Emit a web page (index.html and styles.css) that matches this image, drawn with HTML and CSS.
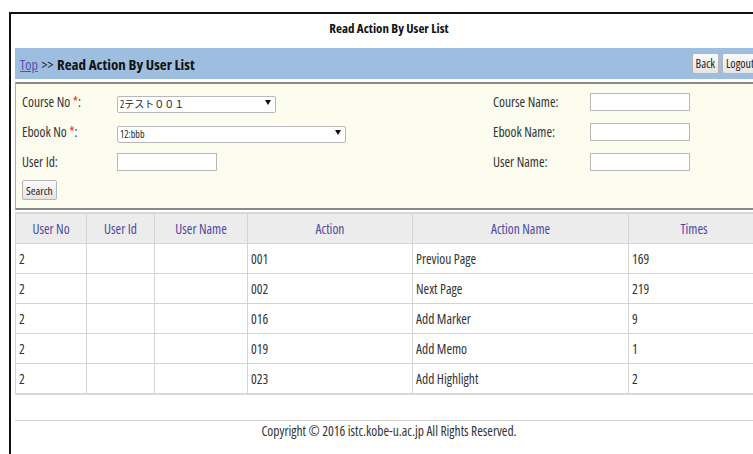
FILE: index.html
```html
<!DOCTYPE html>
<html lang="ja">
<head>
<meta charset="utf-8">
<title>Read Action By User List</title>
<link rel="stylesheet" href="styles.css">
</head>
<body>
<div class="frame">
  <h1 class="page-title">Read Action By User List</h1>

  <div class="nav-bar">
    <div class="crumbs"><a href="#" class="crumb-link">Top</a> &gt;&gt; <b>Read Action By User List</b></div>
    <div class="nav-actions">
      <button class="btn">Back</button>
      <button class="btn">Logout</button>
    </div>
  </div>

  <form class="filter">
    <div class="filter-grid">
      <label class="lbl">Course No <span class="req">*</span>:</label>
      <div class="fld"><span class="sel-wrap sel-course"><select class="sel"><option>2テスト００１</option></select></span></div>
      <label class="lbl">Course Name:</label>
      <div class="fld"><input class="txt" type="text"></div>

      <label class="lbl">Ebook No <span class="req">*</span>:</label>
      <div class="fld"><span class="sel-wrap sel-ebook"><select class="sel"><option>12:bbb</option></select></span></div>
      <label class="lbl">Ebook Name:</label>
      <div class="fld"><input class="txt" type="text"></div>

      <label class="lbl">User Id:</label>
      <div class="fld"><input class="txt" type="text"></div>
      <label class="lbl">User Name:</label>
      <div class="fld"><input class="txt" type="text"></div>
    </div>
    <button type="button" class="btn btn-search">Search</button>
  </form>

  <table class="list">
    <colgroup>
      <col style="width:71px"><col style="width:68px"><col style="width:93px">
      <col style="width:165px"><col style="width:216px"><col>
    </colgroup>
    <thead>
      <tr><th>User No</th><th>User Id</th><th>User Name</th><th>Action</th><th>Action Name</th><th>Times</th></tr>
    </thead>
    <tbody>
      <tr><td>2</td><td></td><td></td><td>001</td><td>Previou Page</td><td>169</td></tr>
      <tr><td>2</td><td></td><td></td><td>002</td><td>Next Page</td><td>219</td></tr>
      <tr><td>2</td><td></td><td></td><td>016</td><td>Add Marker</td><td>9</td></tr>
      <tr><td>2</td><td></td><td></td><td>019</td><td>Add Memo</td><td>1</td></tr>
      <tr><td>2</td><td></td><td></td><td>023</td><td>Add Highlight</td><td>2</td></tr>
    </tbody>
  </table>

  <footer class="foot">Copyright © 2016 istc.kobe-u.ac.jp All Rights Reserved.</footer>
</div>
</body>
</html>
```

FILE: styles.css
```css
html, body {
  margin: 0;
  padding: 0;
  overflow: hidden;
  background: #fff;
}

body {
  padding: 12px 0 0 9px;
  font-family: "Open Sans", "Noto Sans CJK JP", sans-serif;
  font-stretch: 75%;
  font-size: 13px;
  color: #333;
}

.frame {
  width: 748px;
  min-height: 460px;
  border: 2px solid #111;
  border-right: 0;
  padding: 0 0 0 4px;
}

.page-title {
  margin: 0;
  height: 34px;
  line-height: 29px;
  text-align: center;
  font-size: 13px;
  font-weight: bold;
  color: #111;
}

.nav-bar {
  display: flex;
  align-items: center;
  justify-content: space-between;
  height: 31px;
  background: #9dbedf;
  padding: 0 0 0 5px;
}

.crumbs {
  font-size: 14px;
  color: #222;
  word-spacing: 1px;
}

.crumbs b {
  color: #111;
  font-size: 15px;
  word-spacing: 0;
}

.crumb-link {
  color: #5b4db0;
  text-decoration: underline;
}

.nav-actions {
  display: flex;
  gap: 3px;
  margin-right: 5px;
}

.btn {
  font-family: inherit;
  font-stretch: inherit;
  font-size: 12px;
  color: #222;
  background: linear-gradient(#fbfbfb, #e4e4e4);
  border: 1px solid #b5b5b5;
  border-radius: 2px;
  height: 21px;
  padding: 0 3px;
  line-height: 19px;
}

.filter {
  margin-top: 3px;
  background: #fdfdef;
  border-top: 2px solid #8a8a80;
  border-bottom: 2px solid #8a8a80;
  border-left: 1px solid #b0b0a0;
  padding: 3px 0 0 6px;
  height: 121px;
  box-sizing: content-box;
}

.filter-grid {
  display: grid;
  grid-template-columns: 95px 376px 97px 120px;
  grid-auto-rows: 30px;
  align-items: center;
}

.lbl {
  color: #333;
  font-size: 13.5px;
}

.req { color: #e03030; }

.fld { display: flex; align-items: center; }

/* select box with a small solid arrow drawn over its right end */
.sel-wrap {
  position: relative;
  display: inline-block;
  height: 17px;
}

.sel-wrap::after {
  content: "";
  position: absolute;
  right: 5px;
  top: 6px;
  border-left: 3px solid transparent;
  border-right: 3px solid transparent;
  border-top: 5px solid #111;
}

.sel {
  appearance: none;
  -webkit-appearance: none;
  width: 100%;
  height: 17px;
  box-sizing: border-box;
  font-family: "Open Sans", "Noto Sans CJK JP", sans-serif;
  font-stretch: 75%;
  font-size: 10px;
  line-height: 15px;
  border: 1px solid #b8b8b8;
  border-radius: 2px;
  background: #fff;
  color: #222;
  padding: 0 2px;
  margin: 0;
}

.sel-course { width: 159px; }
.sel-ebook { width: 229px; }

.txt {
  width: 100px;
  height: 18px;
  box-sizing: border-box;
  border: 1px solid #b8b8b8;
  background: #fff;
  margin: 0;
}

.btn-search {
  margin-top: 3px;
  height: 20px;
  font-size: 11.5px;
}

.list {
  margin-top: 2px;
  width: 745px;
  border-collapse: collapse;
  table-layout: fixed;
  border-top: 2px solid #d8d8d8;
  border-bottom: 2px solid #d8d8d8;
}

.list th, .list td {
  height: 29px;
  border: 1px solid #d4d4d4;
  padding: 0 3px;
  font-size: 13.5px;
  font-weight: normal;
}

.list th {
  background: #ececec;
  color: #4e48a4;
  text-align: center;
}

.list td {
  color: #333;
  text-align: left;
}

.foot {
  margin-top: 25px;
  border-top: 1px solid #cfcfcf;
  padding-top: 1px;
  text-align: center;
  font-size: 13.5px;
  color: #333;
}
```
